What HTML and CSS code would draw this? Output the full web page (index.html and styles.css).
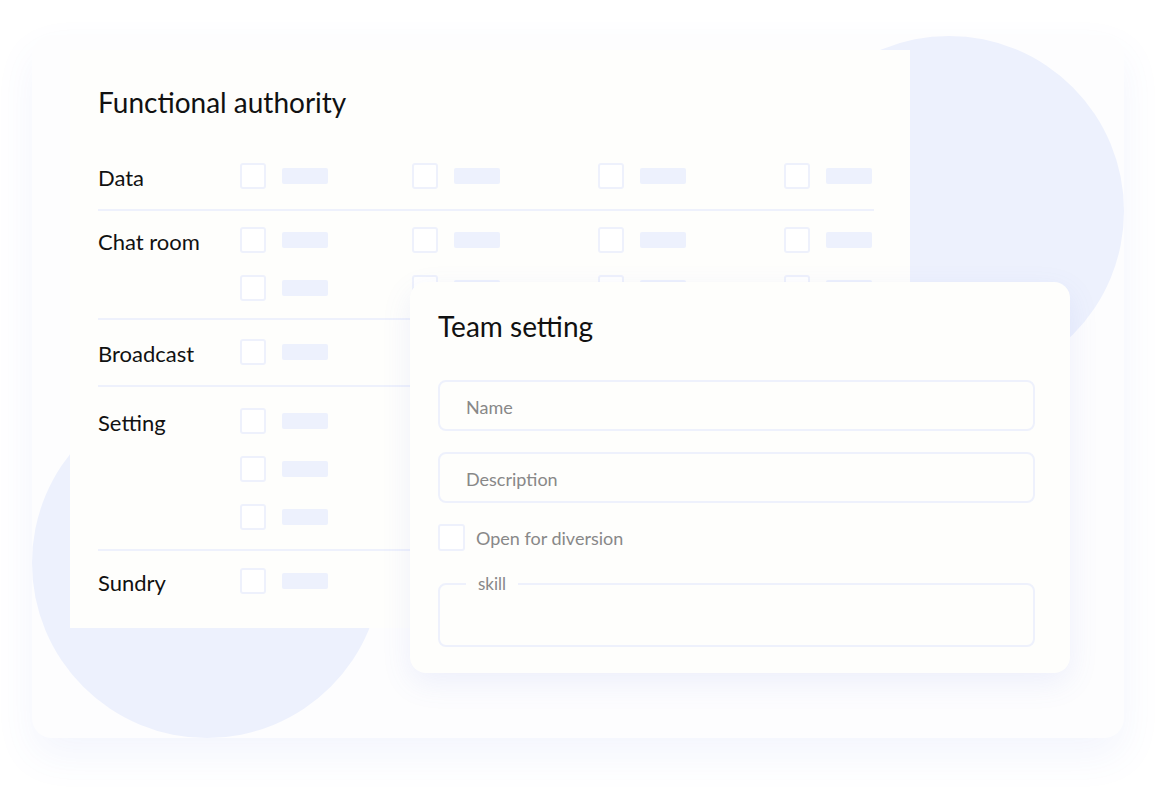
FILE: index.html
```html
<!DOCTYPE html>
<html lang="en">
<head>
    <meta charset="UTF-8">
    <meta name="viewport" content="width=device-width, initial-scale=1.0">
    <title>Functional authority</title>
    <link rel="stylesheet" href="styles.css">
</head>
<body>
    <div class="stage">
        <div class="frame">
            <div class="circle circle-top"></div>
            <div class="circle circle-bottom"></div>

            <!-- permission grid -->
            <div class="panel">
                <h2 class="panel-title">Functional authority</h2>
                <div class="rows">
                    <div class="row">
                        <div class="row-label">Data</div>
                        <div class="opts">
                            <div class="opt"><span class="box"></span><span class="bar"></span></div>
                            <div class="opt"><span class="box"></span><span class="bar"></span></div>
                            <div class="opt"><span class="box"></span><span class="bar"></span></div>
                            <div class="opt"><span class="box"></span><span class="bar"></span></div>
                        </div>
                    </div>
                    <div class="row tight">
                        <div class="row-label">Chat room</div>
                        <div class="opts">
                            <div class="opt"><span class="box"></span><span class="bar"></span></div>
                            <div class="opt"><span class="box"></span><span class="bar"></span></div>
                            <div class="opt"><span class="box"></span><span class="bar"></span></div>
                            <div class="opt"><span class="box"></span><span class="bar"></span></div>
                            <div class="opt"><span class="box"></span><span class="bar"></span></div>
                            <div class="opt"><span class="box"></span><span class="bar"></span></div>
                            <div class="opt"><span class="box"></span><span class="bar"></span></div>
                            <div class="opt"><span class="box"></span><span class="bar"></span></div>
                        </div>
                    </div>
                    <div class="row">
                        <div class="row-label">Broadcast</div>
                        <div class="opts">
                            <div class="opt"><span class="box"></span><span class="bar"></span></div>
                            <div class="opt"><span class="box"></span><span class="bar"></span></div>
                            <div class="opt"><span class="box"></span><span class="bar"></span></div>
                            <div class="opt"><span class="box"></span><span class="bar"></span></div>
                        </div>
                    </div>
                    <div class="row loose">
                        <div class="row-label">Setting</div>
                        <div class="opts single">
                            <div class="opt"><span class="box"></span><span class="bar"></span></div>
                            <div class="opt"><span class="box"></span><span class="bar"></span></div>
                            <div class="opt"><span class="box"></span><span class="bar"></span></div>
                        </div>
                    </div>
                    <div class="row">
                        <div class="row-label">Sundry</div>
                        <div class="opts">
                            <div class="opt"><span class="box"></span><span class="bar"></span></div>
                        </div>
                    </div>
                </div>
            </div>

            <!-- floating form -->
            <div class="card">
                <h3 class="card-title">Team setting</h3>
                <input class="field" type="text" placeholder="Name">
                <input class="field" type="text" placeholder="Description">
                <label class="check">
                    <span class="box big"></span>
                    <span>Open for diversion</span>
                </label>
                <fieldset class="skill">
                    <legend>skill</legend>
                </fieldset>
            </div>
        </div>
    </div>
</body>
</html>
```

FILE: styles.css
```css
body {
    margin: 0;
    background: #ffffff;
    font-family: 'Lato', 'Noto Sans', sans-serif;
    color: #111;
}

.stage {
    width: 1156px;
    height: 800px;
    padding: 35px 32px 0;
    box-sizing: border-box;
}

.frame {
    position: relative;
    width: 1092px;
    height: 703px;
    padding: 15px 0 0 38px;
    box-sizing: border-box;
    background: #fdfdfe;
    border-radius: 20px;
    box-shadow: 0 18px 40px rgba(90, 110, 230, 0.07);
    overflow: hidden;
}

.circle {
    position: absolute;
    width: 350px;
    height: 350px;
    border-radius: 50%;
    background: #edf1fd;
}
.circle-top {
    left: 742px;
    top: 1px;
}
.circle-bottom {
    left: 0;
    top: 353px;
}

.panel {
    position: relative;
    width: 840px;
    height: 578px;
    padding: 34px 36px 0 28px;
    box-sizing: border-box;
    background: #fefefc;
}
.panel-title {
    margin: 0;
    font-size: 28px;
    font-weight: 400;
    line-height: 36px;
}

.rows {
    margin-top: 24px;
}
.row {
    display: flex;
    align-items: flex-start;
    padding: 19px 0 20px;
    border-bottom: 2px solid #eef1fc;
}
.row.tight {
    padding: 16px 0 17px;
}
.row.loose {
    padding: 21px 0 19px;
}
.row:last-child {
    padding-top: 17px;
    border-bottom: none;
}
.row-label {
    width: 142px;
    height: 26px;
    flex-shrink: 0;
    font-size: 22px;
    line-height: 30px;
}

.opts {
    display: grid;
    grid-template-columns: 172px 186px 186px auto;
    align-content: start;
    row-gap: 22px;
}
.opts.single {
    grid-template-columns: 172px;
}
.opt {
    display: flex;
    align-items: center;
    gap: 16px;
}

.box {
    display: block;
    width: 26px;
    height: 26px;
    box-sizing: border-box;
    border: 2px solid #eef1fc;
    border-radius: 3px;
    background: #fff;
}
.box.big {
    width: 27px;
    height: 27px;
}
.bar {
    display: block;
    width: 46px;
    height: 16px;
    border-radius: 2px;
    background: #edf1fd;
}

.card {
    position: absolute;
    left: 378px;
    top: 247px;
    width: 660px;
    height: 391px;
    padding: 26px 35px 0 28px;
    box-sizing: border-box;
    background: #fefefc;
    border-radius: 16px;
    box-shadow: 0 10px 30px rgba(100, 120, 230, 0.10);
    display: flex;
    flex-direction: column;
}
.card-title {
    margin: 0 0 36px;
    font-size: 28px;
    font-weight: 400;
    line-height: 36px;
}

.field {
    display: block;
    width: 100%;
    height: 51px;
    margin: 0 0 21px;
    padding: 2px 26px 0;
    box-sizing: border-box;
    border: 2px solid #eef1fc;
    border-radius: 8px;
    background: #fefefc;
    font-family: inherit;
    font-size: 18px;
    outline: none;
}
.field::placeholder {
    color: #888;
}

.check {
    display: flex;
    align-items: center;
    gap: 11px;
    font-size: 18px;
    color: #888;
}

.skill {
    margin: 23px 0 0;
    padding: 0 0 0 26px;
    height: 73px;
    box-sizing: border-box;
    border: 2px solid #eef1fc;
    border-radius: 8px;
}
.skill legend {
    padding: 0 12px;
    font-size: 17px;
    line-height: 20px;
    color: #888;
}
```
